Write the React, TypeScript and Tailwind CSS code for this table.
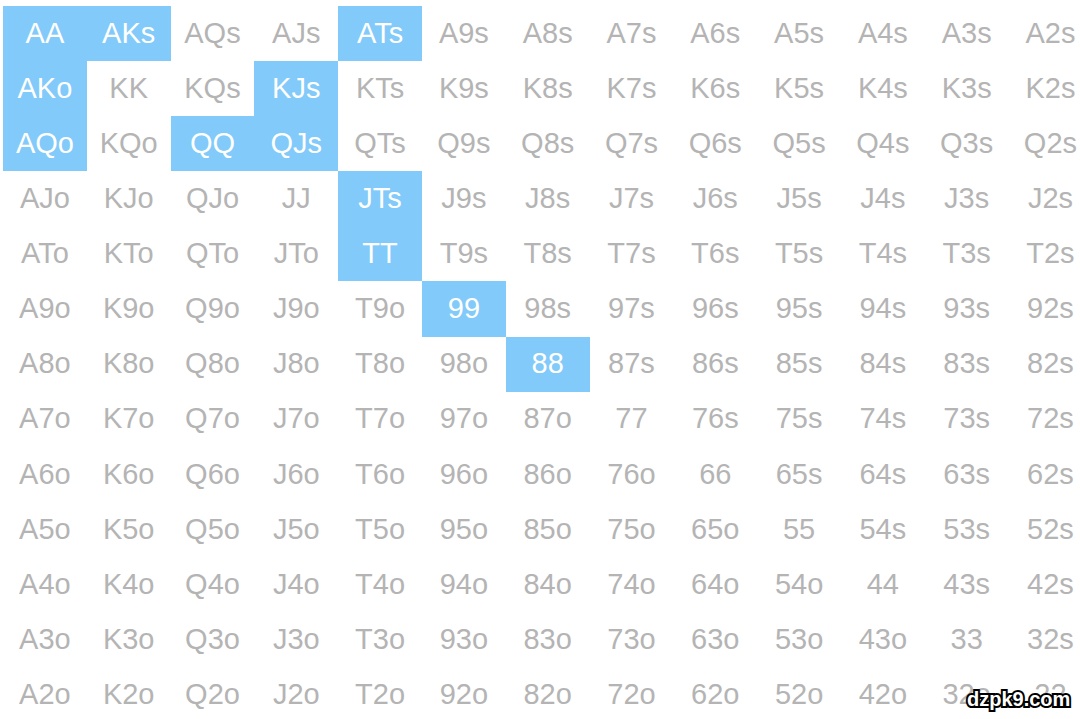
import React from "react";

const ranks = ["A", "K", "Q", "J", "T", "9", "8", "7", "6", "5", "4", "3", "2"];

const picked = new Set([
  "0-0", "0-1", "0-4",
  "1-0", "1-3",
  "2-0", "2-2", "2-3",
  "3-4", "4-4", "5-5", "6-6",
]);

function handName(row: number, col: number) {
  if (row === col) return ranks[row] + ranks[col];
  if (col > row) return ranks[row] + ranks[col] + "s";
  return ranks[col] + ranks[row] + "o";
}

function App() {
  return (
    <div className="relative h-[719px] w-[1080px] overflow-hidden bg-white font-['Liberation_Sans',Arial,sans-serif]">
      <div className="ml-[3px] mt-[6px] grid grid-cols-[repeat(13,83.8px)] auto-rows-[55.1px]">
        {ranks.map((_, row) =>
          ranks.map((_, col) => {
            const on = picked.has(`${row}-${col}`);
            return (
              <div
                key={`${row}-${col}`}
                className={
                  on
                    ? "flex items-center justify-center bg-[#82caf9] text-[29px] text-white"
                    : "flex items-center justify-center text-[29px] text-[#b4b4b4]"
                }
              >
                {handName(row, col)}
              </div>
            );
          })
        )}
      </div>
      <div className="absolute left-[967px] top-[689px] text-[20px] font-bold leading-none text-white [paint-order:stroke_fill] [-webkit-text-stroke:4px_#000]">
        dzpk9.com
      </div>
    </div>
  );
}

export default App;
